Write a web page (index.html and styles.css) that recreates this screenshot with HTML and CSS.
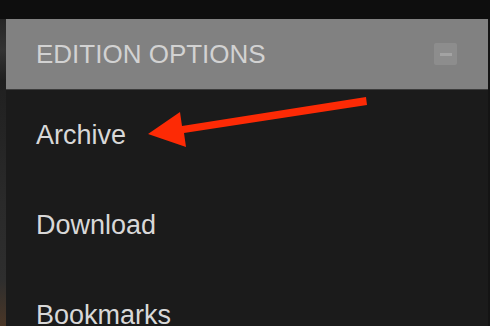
FILE: index.html
```html
<!DOCTYPE html>
<html lang="en">
<head>
    <meta charset="UTF-8">
    <title>Edition Options</title>
    <link rel="stylesheet" href="styles.css">
</head>
<body>
    <div class="topbar"></div>

    <div class="main">
        <div class="side-strip"></div>

        <div class="panel">
            <div class="panel-header">
                <span class="panel-title">EDITION OPTIONS</span>
                <button class="collapse-button" aria-label="Collapse"><span class="collapse-dash"></span></button>
            </div>

            <ul class="menu">
                <li class="menu-item">Archive</li>
                <li class="menu-item">Download</li>
                <li class="menu-item">Bookmarks</li>
            </ul>

            <!-- annotation arrow pointing at Archive -->
            <svg class="pointer-arrow" width="240" height="60" viewBox="0 0 240 60">
                <polygon fill="#fd2a05" points="8,44 40,22 42,36 226,7 227,15 44,43 46,57"/>
            </svg>
        </div>

        <div class="edge"></div>
    </div>
</body>
</html>
```

FILE: styles.css
```css
body {
    margin: 0;
    background: #0e0e0e;
    font-family: 'Liberation Sans', Arial, sans-serif;
    overflow: hidden;
}

.topbar {
    height: 19px;
    background: #0e0e0e;
}

.main {
    display: flex;
    height: 307px;
}

.side-strip {
    width: 6px;
    background: linear-gradient(#262626 0%, #333 10%, #202020 20%, #2a2a2a 60%, #2e2e2e 85%, #4a3626 100%);
}

.edge {
    width: 2px;
    background: #141414;
}

.panel {
    flex: 1;
    position: relative;
    background: #1b1b1b;
}

.panel-header {
    height: 71px;
    display: flex;
    align-items: center;
    justify-content: space-between;
    padding: 0 31px 0 30px;
    background: #818181;
    border-bottom: 1px solid #3c3c3c;
    box-sizing: border-box;
}

.panel-title {
    font-size: 26px;
    color: #d2d2d2;
    margin-top: 1px;
}

.collapse-button {
    width: 23px;
    height: 22px;
    padding: 0;
    border: none;
    border-radius: 2px;
    background: #8d8d8d;
    display: flex;
    align-items: center;
    justify-content: center;
    cursor: pointer;
}

.collapse-dash {
    width: 12px;
    height: 3px;
    background: #a3a3a3;
}

.menu {
    list-style: none;
    margin: 0;
    padding: 0;
}

.menu-item {
    padding-left: 30px;
    font-size: 27px;
    line-height: 90px;
    color: #d8d8d8;
}

.pointer-arrow {
    position: absolute;
    left: 134px;
    top: 71px;
}
```
